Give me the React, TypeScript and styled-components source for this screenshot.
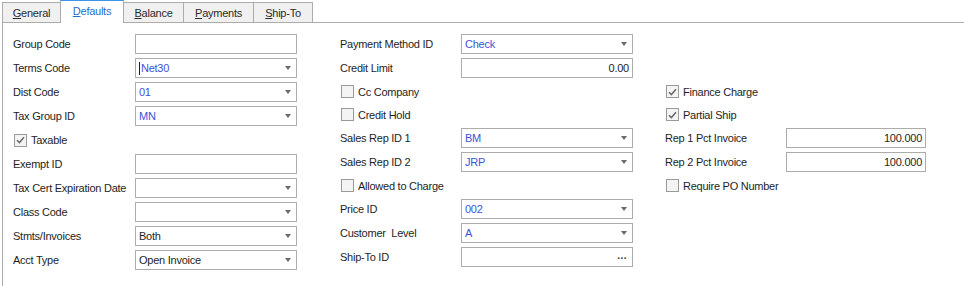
import React from "react";
import styled, { createGlobalStyle } from "styled-components";

const GlobalStyle = createGlobalStyle`
  html, body { margin: 0; padding: 0; background: #ffffff; }
  body {
    font-family: "Liberation Sans", Arial, sans-serif;
    font-size: 11px;
    letter-spacing: -0.25px;
    color: #1e1e1e;
  }
`;

const Page = styled.div`
  width: 964px;
  height: 286px;
  overflow: hidden;
  background: #ffffff;
`;

const TabStrip = styled.div`
  display: flex;
  align-items: flex-end;
  height: 23px;
  padding-left: 2px;
`;

const Tab = styled.div<{ $w: number; $active?: boolean }>`
  box-sizing: border-box;
  width: ${(p) => p.$w}px;
  height: ${(p) => (p.$active ? 23 : 21)}px;
  margin-left: -1px;
  &:first-child { margin-left: 0; }
  display: flex;
  align-items: center;
  justify-content: center;
  padding-bottom: ${(p) => (p.$active ? 2 : 0)}px;
  border: 1px solid #acacac;
  border-top: ${(p) => (p.$active ? "1px solid #3d95e6" : "1px solid #acacac")};
  border-bottom: ${(p) => (p.$active ? "none" : "1px solid #acacac")};
  background: ${(p) => (p.$active ? "#ffffff" : "#f0f0f0")};
  color: ${(p) => (p.$active ? "#1f6fd0" : "#2b2b2b")};
  position: relative;
  z-index: ${(p) => (p.$active ? 1 : 0)};
  u { text-decoration: underline; text-underline-offset: 1px; }
`;

const TabFill = styled.div`
  flex: 1;
  height: 23px;
  box-sizing: border-box;
  border-bottom: 1px solid #acacac;
`;

const Panel = styled.div`
  margin-left: 2px;
  border-left: 1px solid #acacac;
  height: 263px;
  box-sizing: border-box;
  padding: 9px 0 0 10px;
  display: flex;
`;

const Column = styled.div<{ $w: number; $ml?: number; $pt?: number }>`
  display: flex;
  flex-direction: column;
  width: ${(p) => p.$w}px;
  margin-left: ${(p) => p.$ml ?? 0}px;
  padding-top: ${(p) => p.$pt ?? 0}px;
`;

const Row = styled.div<{ $h?: number }>`
  display: flex;
  align-items: center;
  height: ${(p) => p.$h ?? 24}px;
`;

const Label = styled.div<{ $w: number }>`
  width: ${(p) => p.$w}px;
  flex: none;
  white-space: pre;
  color: #1e1e1e;
`;

const Box = styled.div<{ $w: number; $right?: boolean; $blue?: boolean }>`
  box-sizing: border-box;
  width: ${(p) => p.$w}px;
  height: 20px;
  border: 1px solid #acacac;
  background: #ffffff;
  display: flex;
  align-items: center;
  justify-content: ${(p) => (p.$right ? "flex-end" : "flex-start")};
  padding: 0 5px 0 3px;
  padding-right: ${(p) => (p.$right ? 3 : 5)}px;
  color: ${(p) => (p.$blue ? "#3f51d9" : "#1e1e1e")};
  white-space: nowrap;
  position: relative;
`;

const Value = styled.span`
  flex: 1;
`;

const Caret = styled.span`
  width: 1px;
  height: 13px;
  background: #1e1e1e;
  margin-right: 1px;
`;

const Arrow = styled.span`
  width: 0;
  height: 0;
  border-left: 3.5px solid transparent;
  border-right: 3.5px solid transparent;
  border-top: 4px solid #6a6a6a;
  flex: none;
`;

const Dots = styled.span`
  color: #333;
  letter-spacing: 0.5px;
  font-weight: bold;
  font-size: 10px;
  margin-top: -4px;
`;

const CheckRow = styled.div<{ $h?: number }>`
  display: flex;
  align-items: center;
  height: ${(p) => p.$h ?? 24}px;
  gap: 4px;
  padding-left: 1px;
`;

const CheckBoxSquare = styled.span`
  box-sizing: border-box;
  width: 13px;
  height: 13px;
  border: 1px solid #9a9a9a;
  background: #f4f4f4;
  display: flex;
  align-items: center;
  justify-content: center;
  flex: none;
`;

const CheckLabel = styled.span`
  white-space: nowrap;
  color: #1e1e1e;
`;

const Check = ({ checked, label, h }: { checked?: boolean; label: string; h?: number }) => (
  <CheckRow $h={h}>
    <CheckBoxSquare>
      {checked && (
        <svg width="9" height="8" viewBox="0 0 9 8">
          <path d="M1 4.2 L3.4 6.6 L8 1.2" fill="none" stroke="#6b6b6b" strokeWidth="1.5" />
        </svg>
      )}
    </CheckBoxSquare>
    <CheckLabel>{label}</CheckLabel>
  </CheckRow>
);

type FieldProps = {
  label: string;
  lw: number;
  iw: number;
  value?: string;
  blue?: boolean;
  combo?: boolean;
  right?: boolean;
  caret?: boolean;
  dots?: boolean;
  h?: number;
};

const Field = ({ label, lw, iw, value, blue, combo, right, caret, dots, h }: FieldProps) => (
  <Row $h={h}>
    <Label $w={lw}>{label}</Label>
    <Box $w={iw} $right={right} $blue={blue}>
      {caret && <Caret />}
      {right ? <span>{value}</span> : <Value>{value}</Value>}
      {combo && <Arrow />}
      {dots && <Dots>...</Dots>}
    </Box>
  </Row>
);

export default function App() {
  return (
    <Page>
      <GlobalStyle />
      <TabStrip>
        <Tab $w={59}><span><u>G</u>eneral</span></Tab>
        <Tab $w={64} $active><span><u>D</u>efaults</span></Tab>
        <Tab $w={61}><span><u>B</u>alance</span></Tab>
        <Tab $w={71}><span><u>P</u>ayments</span></Tab>
        <Tab $w={60}><span><u>S</u>hip-To</span></Tab>
        <TabFill />
      </TabStrip>
      <Panel>
        <Column $w={284}>
          <Field label="Group Code" lw={122} iw={162} />
          <Field label="Terms Code" lw={122} iw={162} value="Net30" blue combo caret />
          <Field label="Dist Code" lw={122} iw={162} value="01" blue combo />
          <Field label="Tax Group ID" lw={122} iw={162} value="MN" blue combo />
          <Check label="Taxable" checked />
          <Field label="Exempt ID" lw={122} iw={162} />
          <Field label="Tax Cert Expiration Date" lw={122} iw={162} combo />
          <Field label="Class Code" lw={122} iw={162} combo />
          <Field label="Stmts/Invoices" lw={122} iw={162} value="Both" combo />
          <Field label="Acct Type" lw={122} iw={162} value="Open Invoice" combo />
        </Column>
        <Column $w={293} $ml={43}>
          <Field label="Payment Method ID" lw={121} iw={172} value="Check" blue combo />
          <Field label="Credit Limit" lw={121} iw={172} value="0.00" right />
          <Check label="Cc Company" h={23} />
          <Check label="Credit Hold" h={23} />
          <Field label="Sales Rep ID 1" lw={121} iw={172} value="BM" blue combo />
          <Field label="Sales Rep ID 2" lw={121} iw={172} value="JRP" blue combo />
          <Check label="Allowed to Charge" h={23} />
          <Field label="Price ID" lw={121} iw={172} value="002" blue combo />
          <Field label="Customer  Level" lw={121} iw={172} value="A" blue combo />
          <Field label="Ship-To ID" lw={121} iw={172} dots />
        </Column>
        <Column $w={261} $ml={32} $pt={48}>
          <Check label="Finance Charge" h={23} checked />
          <Check label="Partial Ship" h={23} checked />
          <Field label="Rep 1 Pct Invoice" lw={121} iw={140} value="100.000" right />
          <Field label="Rep 2 Pct Invoice" lw={121} iw={140} value="100.000" right />
          <Check label="Require PO Number" h={23} />
        </Column>
      </Panel>
    </Page>
  );
}
